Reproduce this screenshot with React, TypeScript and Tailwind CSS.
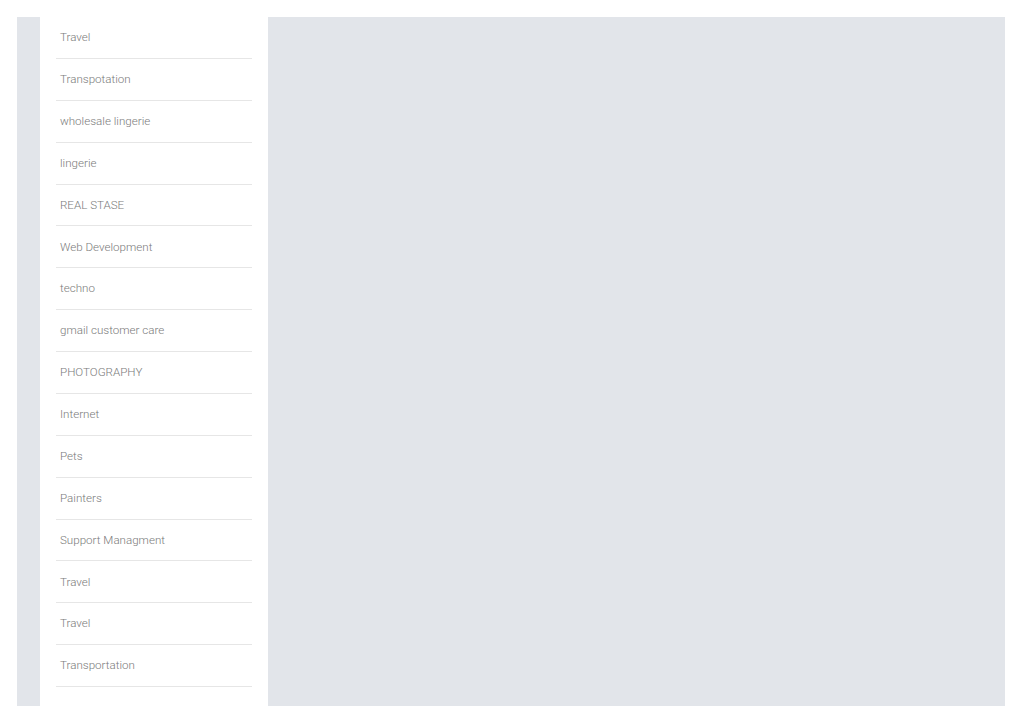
const categories = [
  'Travel',
  'Transpotation',
  'wholesale lingerie',
  'lingerie',
  'REAL STASE',
  'Web Development',
  'techno',
  'gmail customer care',
  'PHOTOGRAPHY',
  'Internet',
  'Pets',
  'Painters',
  'Support Managment',
  'Travel',
  'Travel',
  'Transportation',
]

const App = () => {
  return (
    <div className="w-[1024px] h-[723px] bg-white p-[17px] pr-[19px]">
      <div className="flex h-[689px] bg-[#e2e5ea] pl-[23px]">
        {/* Sidebar */}
        <aside className="w-[228px] shrink-0 bg-white px-4">
          <ul>
            {categories.map((name, i) => (
              <li
                key={i}
                className="flex h-[41.875px] items-center border-b border-[#e6e6e6] pl-1 pt-px text-[11.6px] font-light text-[#7a7a7a] font-['Roboto',sans-serif]"
              >
                {name}
              </li>
            ))}
          </ul>
        </aside>

        {/* Content */}
        <main className="flex-1" />
      </div>
    </div>
  )
}

export default App
